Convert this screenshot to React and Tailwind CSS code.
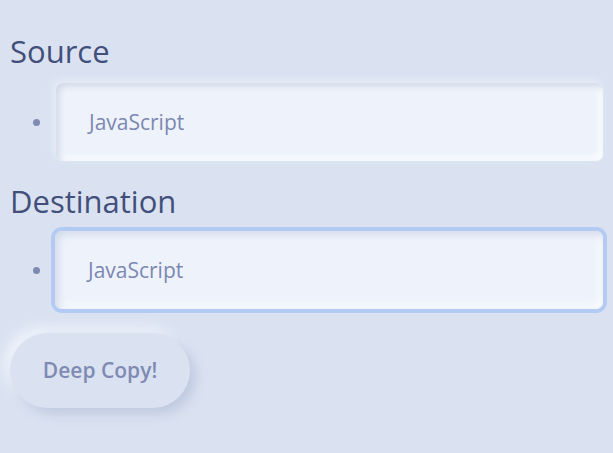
import React from "react";

function Field({ focused }) {
  return (
    <li className="flex items-center">
      <span className="w-[7px] h-[7px] rounded-full bg-[#7f8ab3] ml-[23px] shrink-0" />
      <div
        className={
          "w-[550px] h-[78px] rounded-[7px] bg-[#eef3fb] flex items-center pl-[33px] " +
          (focused
            ? "ml-[15px] shadow-[0_0_0_4px_#b3cbf2,inset_3px_3px_8px_#cfd8e8,inset_-3px_-3px_8px_#ffffff]"
            : "ml-[16px] shadow-[-3px_-3px_6px_#e6ecf7,inset_3px_3px_7px_#cfd8e8,inset_-3px_-3px_7px_#ffffff]")
        }
      >
        <span className="text-[21px] text-[#7c87b2] leading-none">JavaScript</span>
      </div>
    </li>
  );
}

export default function App() {
  return (
    <div className="min-h-screen bg-[#dae2f1] px-[10px] pt-[30px] font-['Open_Sans','Noto_Sans',sans-serif]">
      <h2 className="text-[31px] leading-[42px] text-[#424f7a] font-normal">Source</h2>
      <ul className="mt-[11px]">
        <Field />
      </ul>
      <h2 className="mt-[19px] text-[31px] leading-[42px] text-[#424f7a] font-normal">Destination</h2>
      <ul className="mt-[9px]">
        <Field focused />
      </ul>
      <button className="mt-[24px] w-[180px] h-[75px] rounded-full bg-[#dae2f1] text-[21px] font-semibold text-[#7f8ab3] shadow-[6px_6px_12px_#bfcadf,-6px_-6px_12px_#eef3fb]">
        Deep Copy!
      </button>
    </div>
  );
}
